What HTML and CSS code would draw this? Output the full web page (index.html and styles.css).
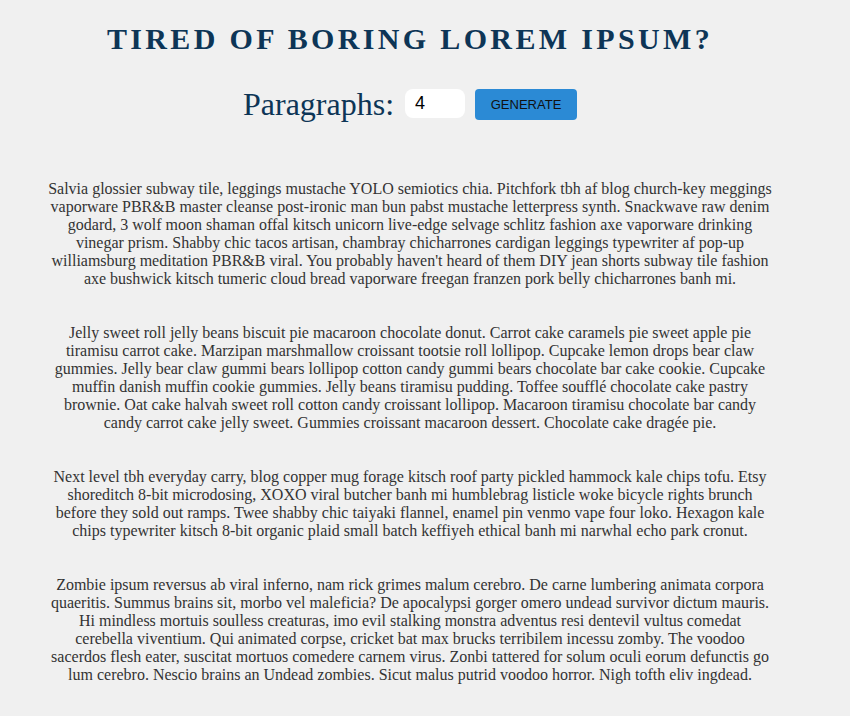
FILE: index.html
```html
<!DOCTYPE html>
<html>
<head>
<meta charset="utf-8">
<link rel="stylesheet" href="styles.css">
</head>
<body>
<div class="page">
  <h1 class="title">Tired of boring lorem ipsum?</h1>
  <form class="controls">
    <label class="label" for="amount">Paragraphs:</label>
    <input class="amount" id="amount" type="text" value="4">
    <button class="btn" type="button">GENERATE</button>
  </form>
  <article class="text">
    <p>Salvia glossier subway tile, leggings mustache YOLO semiotics chia. Pitchfork tbh af blog church-key meggings<br>vaporware PBR&amp;B master cleanse post-ironic man bun pabst mustache letterpress synth. Snackwave raw denim<br>godard, 3 wolf moon shaman offal kitsch unicorn live-edge selvage schlitz fashion axe vaporware drinking<br>vinegar prism. Shabby chic tacos artisan, chambray chicharrones cardigan leggings typewriter af pop-up<br>williamsburg meditation PBR&amp;B viral. You probably haven't heard of them DIY jean shorts subway tile fashion<br>axe bushwick kitsch tumeric cloud bread vaporware freegan franzen pork belly chicharrones banh mi.</p>
    <p>Jelly sweet roll jelly beans biscuit pie macaroon chocolate donut. Carrot cake caramels pie sweet apple pie<br>tiramisu carrot cake. Marzipan marshmallow croissant tootsie roll lollipop. Cupcake lemon drops bear claw<br>gummies. Jelly bear claw gummi bears lollipop cotton candy gummi bears chocolate bar cake cookie. Cupcake<br>muffin danish muffin cookie gummies. Jelly beans tiramisu pudding. Toffee soufflé chocolate cake pastry<br>brownie. Oat cake halvah sweet roll cotton candy croissant lollipop. Macaroon tiramisu chocolate bar candy<br>candy carrot cake jelly sweet. Gummies croissant macaroon dessert. Chocolate cake dragée pie.</p>
    <p>Next level tbh everyday carry, blog copper mug forage kitsch roof party pickled hammock kale chips tofu. Etsy<br>shoreditch 8-bit microdosing, XOXO viral butcher banh mi humblebrag listicle woke bicycle rights brunch<br>before they sold out ramps. Twee shabby chic taiyaki flannel, enamel pin venmo vape four loko. Hexagon kale<br>chips typewriter kitsch 8-bit organic plaid small batch keffiyeh ethical banh mi narwhal echo park cronut.</p>
    <p>Zombie ipsum reversus ab viral inferno, nam rick grimes malum cerebro. De carne lumbering animata corpora<br>quaeritis. Summus brains sit, morbo vel maleficia? De apocalypsi gorger omero undead survivor dictum mauris.<br>Hi mindless mortuis soulless creaturas, imo evil stalking monstra adventus resi dentevil vultus comedat<br>cerebella viventium. Qui animated corpse, cricket bat max brucks terribilem incessu zomby. The voodoo<br>sacerdos flesh eater, suscitat mortuos comedere carnem virus. Zonbi tattered for solum oculi eorum defunctis go<br>lum cerebro. Nescio brains an Undead zombies. Sicut malus putrid voodoo horror. Nigh tofth eliv ingdead.</p>
  </article>
</div>
</body>
</html>
```

FILE: styles.css
```css
html, body {
  margin: 0;
  padding: 0;
  background: #f0f0f0;
}
body {
  font-family: "Liberation Serif", "Times New Roman", serif;
  color: #333;
}
.page {
  width: 820px;
  padding-top: 22px;
  text-align: center;
}
.title {
  margin: 0;
  font-size: 30px;
  font-weight: bold;
  text-transform: uppercase;
  letter-spacing: 3.35px;
  color: #0d3556;
  line-height: 34px;
}
.controls {
  margin-top: 30px;
  display: flex;
  justify-content: center;
  align-items: center;
  gap: 10px;
}
.label {
  font-size: 32px;
  color: #0d3556;
  margin-right: 1px;
}
.amount {
  width: 60px;
  height: 29px;
  box-sizing: border-box;
  border: none;
  border-radius: 8px;
  background: #fff;
  font-family: "Liberation Sans", Arial, sans-serif;
  font-size: 18px;
  padding: 0 10px;
  color: #000;
  margin-top: -2px;
}
.btn {
  width: 102px;
  height: 31px;
  border: none;
  border-radius: 4px;
  background: #2b8ad5;
  font-family: "Liberation Sans", Arial, sans-serif;
  font-size: 13px;
  color: #111;
}
.text {
  width: 770px;
  margin: 57px 0 0 25px;
  font-size: 16px;
  line-height: 18px;
}
.text p {
  margin: 0 0 36px;
}
```
